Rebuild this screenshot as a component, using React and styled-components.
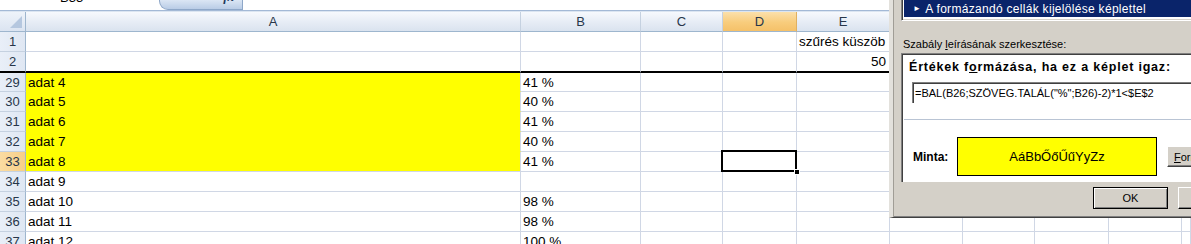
import React from 'react';
import styled, { createGlobalStyle } from 'styled-components';

const Global = createGlobalStyle`
  html, body { margin: 0; padding: 0; background: #fff; overflow: hidden; }
  body { font-family: "Liberation Sans", Arial, sans-serif; }
  * { box-sizing: border-box; }
`;

const Page = styled.div`
  position: relative;
  width: 1191px;
  height: 244px;
  overflow: hidden;
  background: #fff;
`;

/* ---------- formula bar (cropped) ---------- */
const FormulaBar = styled.div`
  height: 11px;
  display: flex;
  background: #fff;
  border-bottom: 1px solid #a3b9d6;
  overflow: hidden;
`;
const NameBox = styled.div`
  width: 159px;
  padding-left: 60px;
  font-size: 13px;
  line-height: 13px;
  color: #000;
`;
const Clipped = styled.span`
  display: block;
  margin-top: ${p => p.$shift}px;
`;
const FxButton = styled.div`
  width: 84px;
  height: 10px;
  background: linear-gradient(#dbe6f4, #b9cce6);
  border: 1px solid #8ea7c8;
  border-top: none;
  border-bottom-left-radius: 9px;
  display: flex;
  justify-content: flex-end;
  padding-right: 8px;
  font-family: "Liberation Serif", serif;
  font-style: italic;
  font-weight: bold;
  font-size: 13px;
  line-height: 13px;
  color: #1e3a5c;
`;
const FormulaInput = styled.div`
  flex: 1;
`;
const BarGap = styled.div`
  height: 1px;
  background: #dbe5f1;
`;

/* ---------- sheet grid ---------- */
const Sheet = styled.div`
  display: grid;
  grid-template-columns: 26px 495px 120px 82px 74px 93px 73px 72px 74px 73px 1fr;
  grid-auto-rows: 20px;
  grid-template-rows: 20px 20px 21px 19px;
  font-size: 13.5px;
`;

const Corner = styled.div`
  position: relative;
  background: linear-gradient(#eef3fa, #dbe4f1);
  border-right: 1px solid #9eb6ce;
  border-bottom: 1px solid #9eb6ce;
  &::after {
    content: "";
    position: absolute;
    right: 3px;
    bottom: 3px;
    width: 0;
    height: 0;
    border-left: 12px solid transparent;
    border-bottom: 12px solid #b5c7df;
  }
`;

const ColHead = styled.div`
  background: ${p => (p.$active
    ? 'linear-gradient(#fbe0ab, #f8cc7c 55%, #f5c169)'
    : 'linear-gradient(#f6f9fd, #e6ecf5 55%, #dae3ef)')};
  border-right: 1px solid ${p => (p.$active ? '#e0b060' : '#c5d1e0')};
  border-bottom: 1px solid #9eb6ce;
  display: flex;
  align-items: center;
  justify-content: center;
  font-size: 13px;
  color: #27364a;
`;

const RowHead = styled.div`
  background: ${p => (p.$active ? 'linear-gradient(90deg, #fbdca2, #f7cf87)' : 'linear-gradient(90deg, #e9eff8, #dfe7f3)')};
  border-right: 1px solid #9eb6ce;
  border-bottom: ${p => (p.$freeze ? '2px solid #000' : '1px solid #c5d1e0')};
  display: flex;
  align-items: center;
  justify-content: center;
  font-size: 13px;
  color: #27364a;
`;

const Cell = styled.div`
  position: relative;
  background: ${p => (p.$fill ? '#ffff00' : '#fff')};
  border-right: 1px solid #d0d7e5;
  border-bottom: ${p => (p.$freeze ? '2px solid #000' : `1px solid ${p.$fillJoin ? '#ffff00' : '#d0d7e5'}`)};
  display: flex;
  align-items: center;
  justify-content: ${p => (p.$right ? 'flex-end' : 'flex-start')};
  padding: 0 3px 0 2px;
  white-space: nowrap;
  color: #000;
  &::after {
    content: "";
    display: ${p => (p.$active ? 'block' : 'none')};
    position: absolute;
    top: -2px;
    left: -2px;
    right: -1px;
    bottom: -1px;
    border: 2px solid #000;
    pointer-events: none;
  }
`;
const FillHandle = styled.span`
  position: absolute;
  right: -4px;
  bottom: -4px;
  width: 6px;
  height: 6px;
  background: #000;
  border: 1px solid #fff;
  z-index: 2;
`;

/* ---------- dialog (overlay) ---------- */
const Dialog = styled.div`
  position: absolute;
  left: 889px;
  top: 0;
  width: 420px;
  height: 218px;
  background: #d4d0c8;
  border-left: 4px solid #e3e1dc;
  border-bottom: 1px solid #404040;
  box-shadow: inset 1px 0 0 #a09d96, inset 0 -1px 0 #808080;
  padding-left: 8px;
  display: flex;
  flex-direction: column;
  font-family: "Liberation Sans", Arial, sans-serif;
  font-size: 11px;
  color: #000;
`;

const ListBox = styled.div`
  height: 21px;
  background: #fff;
  border-left: 1px solid #808080;
  border-bottom: 1px solid #fff;
  box-shadow: inset 1px 0 0 #404040, inset 0 -1px 0 #d4d0c8;
  padding: 0 0 2px 2px;
`;
const SelectedItem = styled.div`
  height: 17px;
  background: #0a246a;
  color: #fff;
  padding-left: 9px;
  display: flex;
  align-items: center;
  white-space: nowrap;
  font-size: 12px;
  letter-spacing: 0.3px;
`;
const Arrow = styled.span`
  font-size: 8px;
  margin-right: 4px;
`;

const Label = styled.div`
  margin-top: 16px;
  padding-left: 2px;
  line-height: 14px;
  white-space: nowrap;
`;

const Panel = styled.div`
  margin-top: 2px;
  height: 129px;
  background: #fff;
  border-top: 1px solid #808080;
  border-left: 1px solid #808080;
  box-shadow: inset 1px 1px 0 #404040;
  padding: 6px 0 0 1px;
  display: flex;
  flex-direction: column;
`;
const PanelTitle = styled.div`
  padding-left: 6px;
  font-weight: bold;
  font-size: 12.5px;
  letter-spacing: 0.8px;
  line-height: 14px;
  white-space: nowrap;
`;
const FormulaField = styled.div`
  margin: 8px 0 0 9px;
  height: 21px;
  background: #fff;
  border-top: 1px solid #808080;
  border-left: 1px solid #808080;
  box-shadow: inset 1px 1px 0 #404040;
  padding-left: 2px;
  display: flex;
  align-items: center;
  white-space: nowrap;
  font-size: 11px;
`;
const Separator = styled.div`
  margin-top: 16px;
  margin-left: 1px;
  height: 1px;
  background: #b9c4d4;
`;
const SampleRow = styled.div`
  margin-top: 17px;
  display: flex;
  align-items: center;
  padding-left: 10px;
`;
const SampleLabel = styled.div`
  width: 44px;
  flex-shrink: 0;
  font-weight: bold;
  font-size: 12px;
`;
const SampleBox = styled.div`
  width: 200px;
  height: 39px;
  flex-shrink: 0;
  background: #ffff00;
  border: 1px solid #000;
  display: flex;
  align-items: center;
  justify-content: center;
  font-size: 13px;
  white-space: nowrap;
`;

const Button = styled.div`
  width: 75px;
  height: ${p => p.$h || 22}px;
  flex-shrink: 0;
  background: #d4d0c8;
  border: 1px solid ${p => (p.$default ? '#000' : '#fff')};
  border-right-color: #000;
  border-bottom-color: #000;
  box-shadow: ${p => (p.$default
    ? 'inset 1px 1px 0 #fff, inset -1px -1px 0 #808080'
    : 'inset -1px -1px 0 #808080')};
  display: flex;
  align-items: center;
  justify-content: ${p => (p.$left ? 'flex-start' : 'center')};
  padding-left: ${p => (p.$left ? '6px' : '0')};
  font-size: 11px;
  white-space: nowrap;
`;
const FormatButton = styled(Button)`
  margin-left: 10px;
  border-color: #fff;
  border-right-color: #404040;
  border-bottom-color: #404040;
`;

const ButtonRow = styled.div`
  margin-top: 5px;
  padding-left: 192px;
  display: flex;
  gap: 10px;
`;

const rows = [
  { n: '1', e: 'szűrés küszöb' },
  { n: '2', e: '50', eRight: true, freeze: true },
  { n: '29', a: 'adat 4', b: '41 %', fill: true },
  { n: '30', a: 'adat 5', b: '40 %', fill: true },
  { n: '31', a: 'adat 6', b: '41 %', fill: true },
  { n: '32', a: 'adat 7', b: '40 %', fill: true },
  { n: '33', a: 'adat 8', b: '41 %', fill: true, active: true, last: true },
  { n: '34', a: 'adat 9' },
  { n: '35', a: 'adat 10', b: '98 %' },
  { n: '36', a: 'adat 11', b: '98 %' },
  { n: '37', a: 'adat 12', b: '100 %' },
];

const colLetters = ['A', 'B', 'C', 'D', 'E', 'F', 'G', 'H', 'I', 'J'];

export default function App() {
  return (
    <Page>
      <Global />
      <FormulaBar>
        <NameBox><Clipped $shift={-9}>B33</Clipped></NameBox>
        <FxButton><Clipped $shift={-10}>fx</Clipped></FxButton>
        <FormulaInput />
      </FormulaBar>
      <BarGap />
      <Sheet>
        <Corner />
        {colLetters.map(l => (
          <ColHead key={l} $active={l === 'D'}>{l}</ColHead>
        ))}
        {rows.map(r => (
          <React.Fragment key={r.n}>
            <RowHead $active={r.active} $freeze={r.freeze}>{r.n}</RowHead>
            <Cell $fill={r.fill} $fillJoin={r.fill && !r.last} $freeze={r.freeze}>{r.a}</Cell>
            <Cell $freeze={r.freeze}>{r.b}</Cell>
            <Cell $freeze={r.freeze} />
            <Cell $freeze={r.freeze} $active={r.active}>
              {r.active && <FillHandle />}
            </Cell>
            <Cell $freeze={r.freeze} $right={r.eRight}>{r.e}</Cell>
            <Cell $freeze={r.freeze} />
            <Cell $freeze={r.freeze} />
            <Cell $freeze={r.freeze} />
            <Cell $freeze={r.freeze} />
            <Cell $freeze={r.freeze} />
          </React.Fragment>
        ))}
      </Sheet>

      <Dialog>
        <ListBox>
          <SelectedItem><Arrow>►</Arrow>A formázandó cellák kijelölése képlettel</SelectedItem>
        </ListBox>
        <Label>Szabály <u>l</u>eírásának szerkesztése:</Label>
        <Panel>
          <PanelTitle>Értékek f<u>o</u>rmázása, ha ez a képlet igaz:</PanelTitle>
          <FormulaField>=BAL(B26;SZÖVEG.TALÁL("%";B26)-2)*1&lt;$E$2</FormulaField>
          <Separator />
          <SampleRow>
            <SampleLabel>Minta:</SampleLabel>
            <SampleBox>AáBbŐőŰűYyZz</SampleBox>
            <FormatButton $h={21} $left><u>F</u>ormátum...</FormatButton>
          </SampleRow>
        </Panel>
        <ButtonRow>
          <Button $default>OK</Button>
          <Button>Mégse</Button>
        </ButtonRow>
      </Dialog>
    </Page>
  );
}
